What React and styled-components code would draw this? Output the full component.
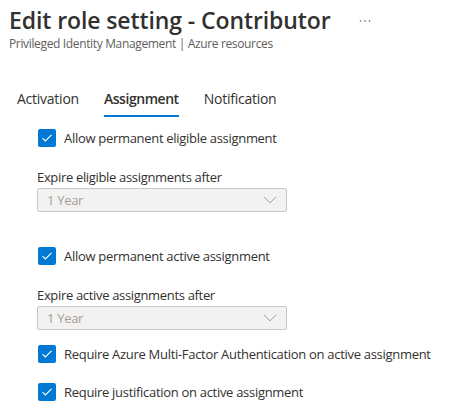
import { createGlobalStyle, styled } from "styled-components"

const GlobalStyle = createGlobalStyle`
  body {
    margin: 0;
    background: #ffffff;
    font-family: "Segoe UI", "Open Sans", sans-serif;
    color: #323130;
  }
`

const settings = [
  {
    check: "Allow permanent eligible assignment",
    label: "Expire eligible assignments after",
    value: "1 Year",
    gap: 34,
  },
  {
    check: "Allow permanent active assignment",
    label: "Expire active assignments after",
    value: "1 Year",
    gap: 0,
  },
]

const CheckIcon = () => (
  <svg width="12" height="10" viewBox="0 0 12 10">
    <polyline points="1.5,5.2 4.4,8 10.5,1.8" fill="none" stroke="#ffffff" strokeWidth="1.1" />
  </svg>
)

const Chevron = () => (
  <svg width="14" height="8" viewBox="0 0 14 8">
    <polyline points="0.8,0.8 7,6.8 13.2,0.8" fill="none" stroke="#a19f9d" strokeWidth="1" />
  </svg>
)

const MoreIcon = () => (
  <svg width="12" height="4" viewBox="0 0 12 4">
    <circle cx="1.5" cy="2" r="0.8" fill="#605e5c" />
    <circle cx="6" cy="2" r="0.8" fill="#605e5c" />
    <circle cx="10.5" cy="2" r="0.8" fill="#605e5c" />
  </svg>
)

const CheckRow = ({ text, top }) => (
  <Row $top={top}>
    <Box><CheckIcon /></Box>
    <span>{text}</span>
  </Row>
)

export default function App() {
  return <Page>
    <GlobalStyle />
    <Header>
      <TitleRow>
        <h1>Edit role setting - Contributor</h1>
        <More><MoreIcon /></More>
      </TitleRow>
      <h2>Privileged Identity Management | Azure resources</h2>
    </Header>
    <Tabs>
      <Tab>Activation</Tab>
      <Tab $active>Assignment</Tab>
      <Tab>Notification</Tab>
    </Tabs>
    <Body>
      {settings.map((s, i) => (
        <Group key={s.label} $bottom={s.gap}>
          <CheckRow text={s.check} top={i === 0 ? 11 : 0} />
          <Label>{s.label}</Label>
          <Dropdown>
            <span>{s.value}</span>
            <Chevron />
          </Dropdown>
        </Group>
      ))}
      <CheckRow text="Require Azure Multi-Factor Authentication on active assignment" top={14} />
      <CheckRow text="Require justification on active assignment" top={18} />
    </Body>
  </Page>
}

const Page = styled.div`
  width: 464px;
  height: 417px;
  overflow: hidden;
  display: flex;
  flex-direction: column;
`

const Header = styled.div`
  padding: 4px 0 0 9px;
  & > h2 {
    margin: 0;
    font-size: 12px;
    line-height: 16px;
    font-weight: 400;
    letter-spacing: -0.35px;
    color: #605e5c;
  }
`

const TitleRow = styled.div`
  display: flex;
  align-items: center;
  & > h1 {
    margin: 0;
    font-size: 23px;
    line-height: 32px;
    font-weight: 600;
    letter-spacing: -0.1px;
    color: #323130;
  }
`

const More = styled.div`
  display: flex;
  margin-left: 28px;
  margin-top: 2px;
`

const Tabs = styled.div`
  display: flex;
  gap: 25px;
  margin-top: 37px;
  padding-left: 17px;
`

const Tab = styled.div`
  display: flex;
  flex-direction: column;
  font-size: 14px;
  line-height: 20px;
  font-weight: ${({ $active }) => ($active ? 600 : 400)};
  letter-spacing: ${({ $active }) => ($active ? "-0.45px" : "-0.25px")};
  color: #323130;
  &::after {
    content: "";
    height: 2px;
    margin-top: 6px;
    background: ${({ $active }) => ($active ? "#0078d4" : "transparent")};
  }
`

const Body = styled.div`
  display: flex;
  flex-direction: column;
  padding-left: 37px;
`

const Group = styled.div`
  display: flex;
  flex-direction: column;
  margin-bottom: ${({ $bottom }) => $bottom}px;
`

const Row = styled.div`
  display: flex;
  align-items: center;
  gap: 8px;
  height: 20px;
  margin-top: ${({ $top }) => $top}px;
  padding-left: 1px;
  font-size: 13px;
  letter-spacing: -0.3px;
  color: #323130;
  white-space: nowrap;
`

const Box = styled.div`
  display: flex;
  align-items: center;
  justify-content: center;
  flex-shrink: 0;
  width: 18px;
  height: 18px;
  border-radius: 2px;
  background: #0078d4;
`

const Label = styled.div`
  margin-top: 20px;
  font-size: 13px;
  line-height: 18px;
  letter-spacing: -0.33px;
  color: #323130;
`

const Dropdown = styled.div`
  display: flex;
  align-items: center;
  justify-content: space-between;
  box-sizing: border-box;
  width: 250px;
  height: 24px;
  margin-top: 2px;
  padding: 0 9px 0 9px;
  border: 1px solid #c8c6c4;
  border-radius: 2px;
  background: #f3f2f1;
  font-size: 13px;
  letter-spacing: -0.3px;
  color: #a19f9d;
`
